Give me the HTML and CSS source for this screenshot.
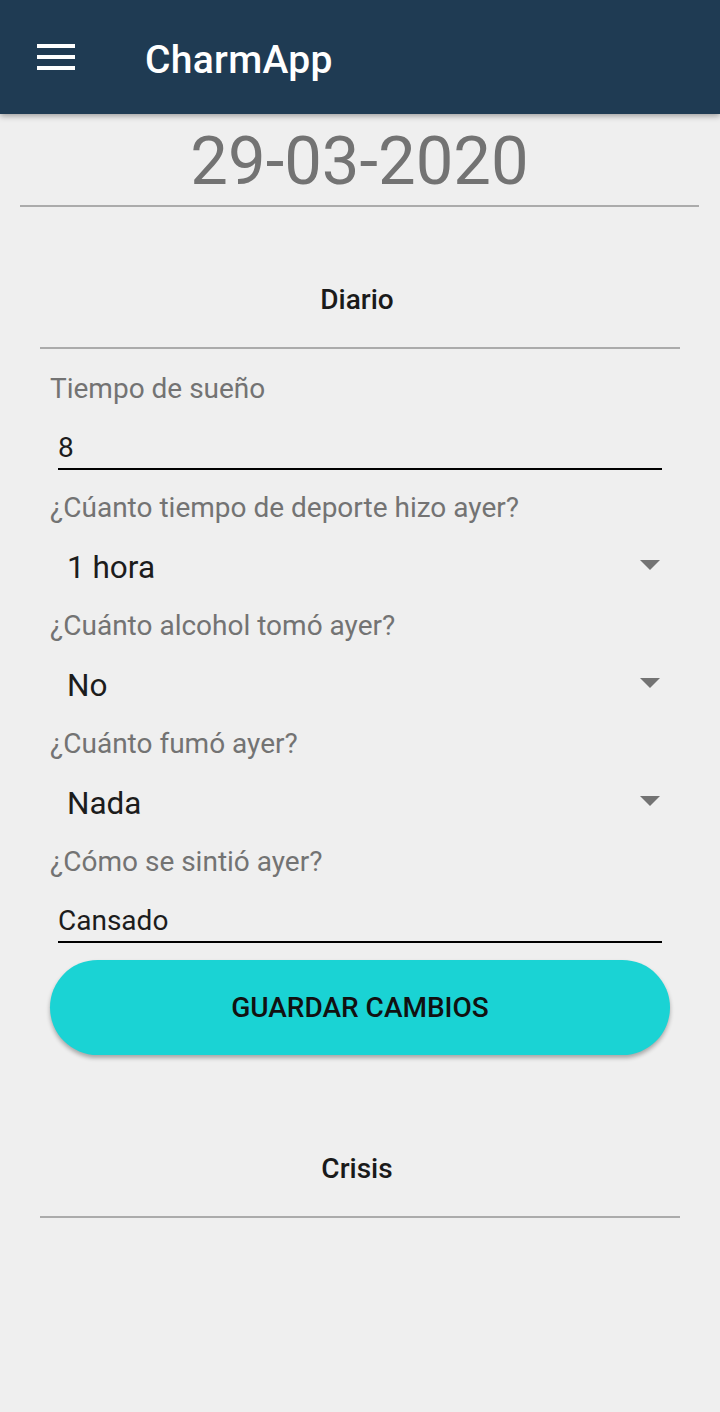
FILE: index.html
```html
<!DOCTYPE html>
<html lang="es">
<head>
<meta charset="utf-8">
<title>CharmApp</title>
<link rel="stylesheet" href="styles.css">
</head>
<body>
<header class="appbar">
  <svg class="menu" width="38" height="26" viewBox="0 0 38 26" aria-hidden="true">
    <rect x="0" y="0" width="38" height="4" fill="#fff"/>
    <rect x="0" y="11" width="38" height="4" fill="#fff"/>
    <rect x="0" y="22" width="38" height="4" fill="#fff"/>
  </svg>
  <div class="title">CharmApp</div>
</header>

<div class="date">29-03-2020</div>

<div class="section-title">Diario</div>

<form class="form">
  <div class="label">Tiempo de sueño</div>
  <div class="input">8</div>

  <div class="label gap">¿Cúanto tiempo de deporte hizo ayer?</div>
  <div class="spinner"><span>1 hora</span><span class="arrow"></span></div>

  <div class="label">¿Cuánto alcohol tomó ayer?</div>
  <div class="spinner"><span>No</span><span class="arrow"></span></div>

  <div class="label">¿Cuánto fumó ayer?</div>
  <div class="spinner"><span>Nada</span><span class="arrow"></span></div>

  <div class="label">¿Cómo se sintió ayer?</div>
  <div class="input">Cansado</div>

  <div class="button">GUARDAR CAMBIOS</div>
</form>

<div class="section-title crisis">Crisis</div>
</body>
</html>
```

FILE: styles.css
```css
html, body {
  margin: 0;
  padding: 0;
}
body {
  background: #efefef;
  font-family: Roboto, "Liberation Sans", sans-serif;
  color: #1c1c1c;
}
.appbar {
  height: 114px;
  background: #1f3b53;
  display: flex;
  align-items: center;
  box-shadow: 0 2px 6px rgba(0, 0, 0, 0.35);
  position: relative;
  z-index: 1;
}
.menu {
  margin-left: 37px;
  display: block;
}
.title {
  margin-left: 70px;
  padding-top: 6px;
  font-size: 39px;
  font-weight: 500;
  color: #fff;
  letter-spacing: 0.3px;
}
.date {
  height: 88px;
  padding-top: 3px;
  line-height: 88px;
  margin: 0 21px 0 20px;
  text-align: center;
  font-size: 67px;
  color: #737373;
  border-bottom: 2px solid #ababab;
}
.section-title {
  margin: 0 40px;
  padding: 73px 6px 27px 0;
  line-height: 40px;
  text-align: center;
  font-size: 28px;
  font-weight: 500;
  color: #1a1a1a;
  border-bottom: 2px solid #ababab;
}
.section-title.crisis {
  padding-top: 94px;
}
.form {
  padding: 20px 50px 0 50px;
  display: flex;
  flex-direction: column;
}
.label {
  line-height: 40px;
  font-size: 28px;
  color: #737373;
  white-space: nowrap;
}
.label.gap {
  margin-top: 18px;
}
.input {
  margin-left: 8px;
  width: 604px;
  padding-top: 19px;
  line-height: 40px;
  font-size: 28px;
  color: #1c1c1c;
  border-bottom: 2px solid #000;
}
.spinner {
  height: 78px;
  display: flex;
  align-items: center;
  justify-content: space-between;
  padding: 0 10px 0 17px;
  font-size: 31.5px;
  color: #1c1c1c;
}
.arrow {
  width: 0;
  height: 0;
  border-left: 10px solid transparent;
  border-right: 10px solid transparent;
  border-top: 10px solid #737373;
  margin-top: -4px;
}
.button {
  margin-top: 17px;
  height: 95px;
  border-radius: 48px;
  background: #1ad3d4;
  display: flex;
  align-items: center;
  justify-content: center;
  font-size: 28px;
  font-weight: 500;
  color: #111;
  box-shadow: 0 3px 4px rgba(0, 0, 0, 0.3);
}
```
